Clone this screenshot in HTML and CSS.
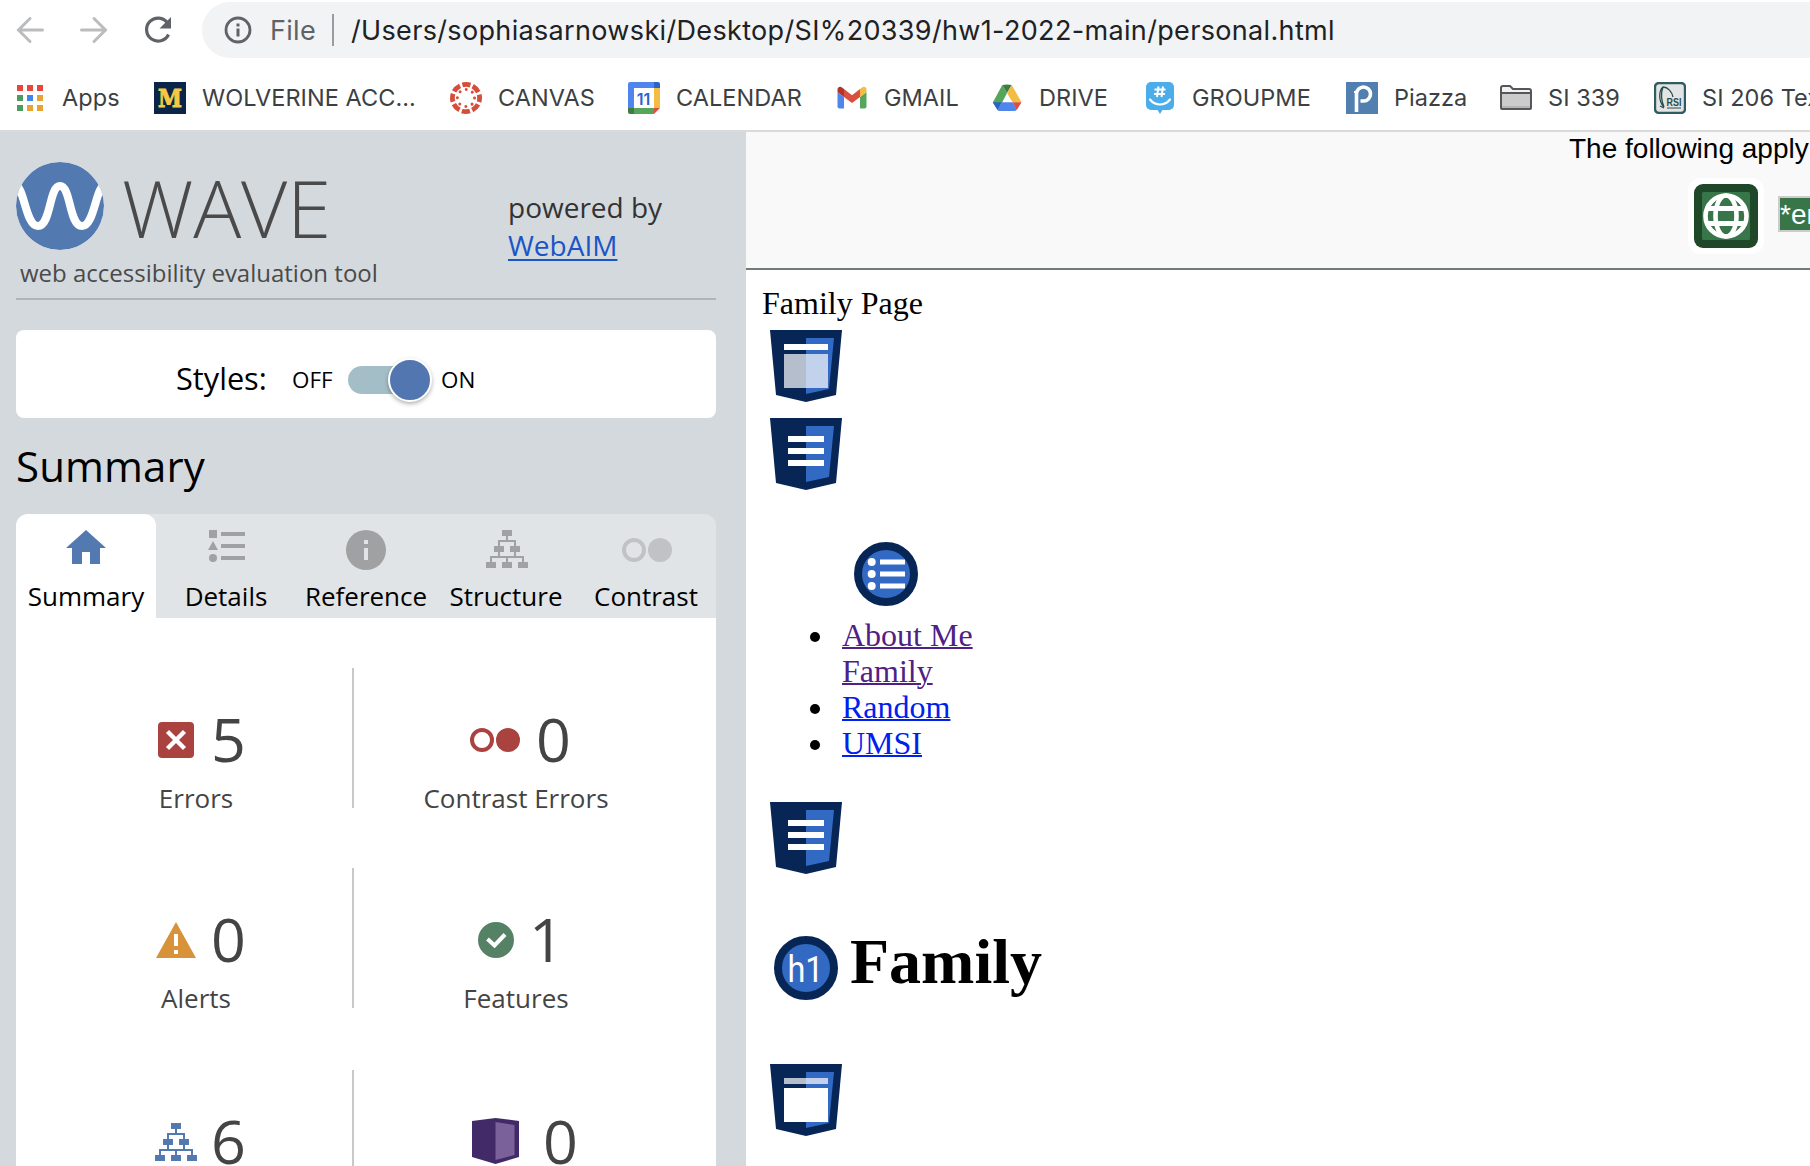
FILE: index.html
```html
<!DOCTYPE html>
<html lang="en">
<head>
<meta charset="utf-8">
<title>Family Page</title>
<link rel="stylesheet" href="styles.css">
</head>
<body>
<svg class="defs" width="0" height="0">
  <defs>
    <symbol id="shield" viewBox="0 0 72 72"><path fill="#072655" d="M0 0h72l-6 65-30 7-30-7z"/><path fill="#326ac3" d="M36 8h28l-5 51-23 5z"/></symbol>
    <symbol id="tree" viewBox="0 0 42 38"><path fill="currentColor" d="M16 0h10v6H16zM8 16h10v6H8zM24 16h10v6H24zM0 32h10v6H0zM16 32h10v6H16zM32 32h10v6H32z"/><path fill="none" stroke="currentColor" stroke-width="2" d="M21 6v5M13 16v-5h16v5M13 22v5M29 22v5M5 32v-5h32v5M21 27v5"/></symbol>
    <symbol id="rings" viewBox="0 0 50 24"><circle cx="12" cy="12" r="10" fill="none" stroke="currentColor" stroke-width="4"/><circle cx="38" cy="12" r="12" fill="currentColor"/></symbol>
  </defs>
</svg>

<header class="browser">
  <div class="toolbar">
    <svg class="nav" width="32" height="32" viewBox="0 0 32 32"><path class="arrow" d="M28.500 16H5M16 4.500 4.500 16 16 27.500"/></svg>
    <svg class="nav" width="32" height="32" viewBox="0 0 32 32"><path class="arrow" d="M3.500 16H27M16 4.500 27.500 16 16 27.500"/></svg>
    <svg class="nav" width="32" height="32" viewBox="0 0 32 32"><path fill="none" stroke="#5f6368" stroke-width="3.200" d="M26.500 20.500A11.500 11.500 0 1 1 25.500 9"/><path fill="#5f6368" d="M29 3v11.500H17.500z"/></svg>
    <div class="address">
      <svg width="28" height="28" viewBox="0 0 28 28"><circle cx="14" cy="14" r="12" fill="none" stroke="#5f6368" stroke-width="2.800"/><path fill="#5f6368" d="M12.500 7.500h3v3h-3zM12.500 12.500h3v8h-3z"/></svg>
      <span class="scheme">File</span>
      <span class="bar"></span>
      <span class="url">/Users/sophiasarnowski/Desktop/SI%20339/hw1-2022-main/personal.html</span>
    </div>
  </div>
  <nav class="bookmarks">
    <a class="bm apps"><svg width="26" height="26" viewBox="0 0 26 26"><path fill="#e8453c" d="M0 0h6v6H0zM10 0h6v6h-6zM20 0h6v6h-6z"/><path fill="#4f9a5d" d="M0 10h6v6H0zM0 20h6v6H0z"/><path fill="#3d86f0" d="M10 10h6v6h-6z"/><path fill="#e8a333" d="M20 10h6v6h-6zM10 20h6v6h-6zM20 20h6v6h-6z"/></svg><span>Apps</span></a>
    <a class="bm"><svg width="32" height="32" viewBox="0 0 32 32"><path fill="#0a2548" d="M0 0h32v32H0z"/><text x="16" y="24.500" text-anchor="middle" textLength="24" lengthAdjust="spacingAndGlyphs" class="mich">M</text></svg><span>WOLVERINE ACC...</span></a>
    <a class="bm"><svg width="32" height="32" viewBox="0 0 32 32"><circle cx="16" cy="16" r="13.600" fill="none" stroke="#d64d3a" stroke-width="4.800" stroke-dasharray="8.200 2.480" stroke-dashoffset="4.100"/><circle cx="16" cy="16" r="8.600" fill="none" stroke="#d64d3a" stroke-width="3" stroke-linecap="round" stroke-dasharray="0.010 6.744"/></svg><span>CANVAS</span></a>
    <a class="bm"><svg width="32" height="32" viewBox="0 0 32 32"><path fill="#4f85ec" d="M2 0h24v6H6v20H0V2a2 2 0 0 1 2-2z"/><path fill="#2a63c9" d="M26 0h4a2 2 0 0 1 2 2v4h-6z"/><path fill="#f3bc42" d="M26 6h6v20h-6z"/><path fill="#56a55b" d="M6 26h20v6H6z"/><path fill="#3b7d42" d="M0 26h6v6H2a2 2 0 0 1-2-2z"/><path fill="#da4f3f" d="M26 26h6l-6 6z"/><text x="15.500" y="22.500" text-anchor="middle" class="day">11</text></svg><span>CALENDAR</span></a>
    <a class="bm"><svg width="32" height="32" viewBox="0 0 32 32"><path fill="#4f85ec" d="M1.500 10v14.500a2 2 0 0 0 2 2H8V15z"/><path fill="#56a55b" d="M30.500 10v14.500a2 2 0 0 1-2 2H24V15z"/><path fill="#da4f3f" d="M8 7v8l8 6 8-6V7l-8 6.200z"/><path fill="#b5342a" d="M1.500 10V7.500C1.500 5 4.200 4 6 5.500L8 7v8z"/><path fill="#f3bc42" d="M30.500 10V7.500C30.500 5 27.800 4 26 5.500L24 7v8z"/></svg><span>GMAIL</span></a>
    <a class="bm"><svg width="32" height="32" viewBox="0 0 32 32"><path fill="#56a55b" d="M11.300 3 16 11 7 28.500 1.800 20.500z"/><path fill="#3b7d42" d="M11.300 3q4.700-1.200 9.400 0L16 11z"/><path fill="#f3bc42" d="M20.700 3 30.500 20.200H21.500L16 11z"/><path fill="#2a63c9" d="M1.800 20.200h9L6.500 28z"/><path fill="#4f85ec" d="M10.800 20.200h10.700l4.300 7.300q-1 1.500-2.500 1.500H8.500q-1.500 0-2-1z"/><path fill="#da4f3f" d="M21.500 20.200h9L25.800 28z"/></svg><span>DRIVE</span></a>
    <a class="bm"><svg width="32" height="32" viewBox="0 0 32 32"><path fill="#4badea" d="M7 0h18a5 5 0 0 1 5 5v18a5 5 0 0 1-5 5h-6.500L16 32l-2.500-4H7a5 5 0 0 1-5-5V5a5 5 0 0 1 5-5z"/><path fill="none" stroke="#fff" stroke-width="2" d="M14.500 4.500 13 15M19 4.500 17.500 15M10.500 7.500h11M10 12h11"/><path fill="none" stroke="#fff" stroke-width="2.200" stroke-linecap="round" d="M6 17.500q4 5 10 5t10-5"/></svg><span>GROUPME</span></a>
    <a class="bm"><svg width="32" height="32" viewBox="0 0 32 32"><path fill="#5180b0" d="M0 0h32v32H0z"/><path fill="none" stroke="#fff" stroke-width="3.600" d="M10.500 30V12a7 7 0 1 1 7 7h-3"/><path fill="none" stroke="#fff" stroke-width="2" d="M8 10h3"/></svg><span>Piazza</span></a>
    <a class="bm"><svg width="32" height="32" viewBox="0 0 32 32"><path fill="#f2f2f2" stroke="#55555a" stroke-width="2" d="M1 26V6q0-2 2-2h7l3 3h16q2 0 2 2v17q0 1-1 1H2q-1 0-1-1z"/><path fill="#cbcbcb" d="M2 12h28v12H2z"/><path fill="#b4b4b4" d="M2 24h28v2H2z"/><path stroke="#55555a" stroke-width="2" d="M1 11h30"/></svg><span>SI 339</span></a>
    <a class="bm"><svg width="32" height="32" viewBox="0 0 32 32"><rect x="1" y="1" width="30" height="30" rx="4" fill="#e3e4e4" stroke="#2f5c60" stroke-width="2.400"/><path fill="none" stroke="#284d50" stroke-width="1.300" d="M10 25C4 19 5 8 9 5c5 0 9 5 10 10M9 5c-3 8-1 15 1 20M6 24l4 2"/><text x="12.500" y="23.500" textLength="15" lengthAdjust="spacingAndGlyphs" class="rsi">RSI</text><path stroke="#284d50" d="M13 26h14"/></svg><span>SI 206 Textbook</span></a>
  </nav>
</header>

<div class="main">
  <aside class="wave">
    <div class="brand">
      <div class="brand-left">
        <div class="logo">
          <svg width="88" height="88" viewBox="0 0 88 88"><defs><clipPath id="disc"><circle cx="44" cy="44" r="44"/></clipPath></defs><g clip-path="url(#disc)"><circle cx="44" cy="44" r="44" fill="#5279b0"/><path fill="none" stroke="#fff" stroke-width="8" d="M-2 22C9 24 9 64 22 64S33 24 44 24 53 64 66 64 79 24 90 22"/></g></svg>
          <span class="wordmark">WAVE</span>
        </div>
        <div class="tagline">web accessibility evaluation tool</div>
      </div>
      <div class="powered">powered by<br><a>WebAIM</a></div>
    </div>
    <div class="styles-box">
      <span class="styles-label">Styles:</span>
      <span class="off">OFF</span>
      <span class="toggle"><span class="knob"></span></span>
      <span class="on">ON</span>
    </div>
    <h2 class="heading">Summary</h2>
    <div class="tabs">
      <div class="tab active"><svg width="40" height="40" viewBox="0 0 40 40"><path fill="#5279b0" d="M20 0 40 18h-6v16H24V22h-8v12H6V18H0z"/></svg><span>Summary</span></div>
      <div class="tab"><svg width="40" height="40" viewBox="0 0 40 40"><path fill="#a0a1a2" d="M3 0h8v8H3zM7 11l5 9H2zM15 2h24v4H15zM15 14h24v4H15zM15 26h24v4H15z"/><circle cx="7" cy="28" r="4" fill="#a0a1a2"/></svg><span>Details</span></div>
      <div class="tab"><svg width="40" height="40" viewBox="0 0 40 40"><circle cx="20" cy="20" r="20" fill="#a0a1a2"/><path fill="#e0e4e6" d="M18 10h4v4h-4zM18 18h4v12h-4z"/></svg><span>Reference</span></div>
      <div class="tab grey"><svg width="42" height="38"><use href="#tree"/></svg><span>Structure</span></div>
      <div class="tab pale"><svg class="rings" width="50" height="24"><use href="#rings"/></svg><span>Contrast</span></div>
    </div>
    <div class="panel">
      <div class="stat left"><div class="count"><span class="ic"><svg width="36" height="36" viewBox="0 0 36 36"><rect width="36" height="36" rx="4" fill="#aa4340"/><path stroke="#fff" stroke-width="4.400" d="m9.500 9.500 17 17m0-17-17 17"/></svg></span><b>5</b></div><span>Errors</span></div>
      <div class="stat right"><div class="count red"><span class="ic"><svg width="50" height="24"><use href="#rings"/></svg></span><b>0</b></div><span>Contrast Errors</span></div>
      <div class="stat left"><div class="count"><span class="ic"><svg width="40" height="36" viewBox="0 0 40 36"><path fill="#d7923a" d="m20 0 20 36H0z"/><path fill="#fff" d="M18 12h4v12h-4zM18 28h4v4h-4z"/></svg></span><b>0</b></div><span>Alerts</span></div>
      <div class="stat right"><div class="count check"><span class="ic"><svg width="36" height="36" viewBox="0 0 36 36"><circle cx="18" cy="18" r="18" fill="#558265"/><path fill="none" stroke="#fff" stroke-width="4" d="m9.500 17 7 6.500L27 12.500"/></svg></span><b>1</b></div><span>Features</span></div>
      <div class="stat left third"><div class="count blue"><span class="ic"><svg width="42" height="38"><use href="#tree"/></svg></span><b>6</b></div></div>
      <div class="stat right third"><div class="count aria"><span class="ic"><svg width="47" height="46" viewBox="0 0 47 46"><path fill="#422a69" d="M0 3 23.500 0 47 3v36l-23.500 7L0 39z"/><path fill="#7a6199" d="m23.500 4 19 3v30l-19 5z"/></svg></span><b>0</b></div></div>
    </div>
  </aside>

  <main class="page">
    <div class="notice">
      <p>The following apply to the entire page:</p>
      <div class="marks">
        <svg width="76" height="76" viewBox="0 0 76 76"><rect width="76" height="76" rx="13" fill="#fff"/><rect x="6" y="6" width="64" height="64" rx="9" fill="#1e4828"/><rect x="14" y="14" width="48" height="48" rx="1.500" fill="#38764a"/><g fill="none" stroke="#fff" stroke-width="4.600"><circle cx="38" cy="38" r="20.500"/><ellipse cx="38" cy="38" rx="10.500" ry="20.500" /><path stroke-width="5" d="M18.500 30.500h39M18.500 45.500h39"/></g></svg>
        <span class="lang">*en</span>
      </div>
    </div>
    <div class="doc">
      <div class="line">Family Page</div>
      <svg class="mark" width="72" height="72"><use href="#shield"/><path fill="#fff" d="M14 14h44v6H14z"/><path fill="#fff" fill-opacity=".7" d="M14 24h44v34H14z"/></svg>
      <svg class="mark" width="72" height="72"><use href="#shield"/><path fill="#fff" d="M18 18h36v6H18zM18 30h36v6H18zM18 42h36v6H18z"/></svg>
      <svg class="list-mark" width="64" height="64" viewBox="0 0 64 64"><circle cx="32" cy="32" r="28" fill="#326ac3" stroke="#072655" stroke-width="8"/><g fill="#fff"><circle cx="17.700" cy="20" r="4"/><circle cx="17.700" cy="32" r="4"/><circle cx="17.700" cy="44" r="4"/><path d="M26 17.500h25v5H26zM26 29.500h25v5H26zM26 41.500h25v5H26z"/></g></svg>
      <ul class="links">
        <li><a class="seen">About Me</a><br><a class="seen">Family</a></li>
        <li><a>Random</a></li>
        <li><a>UMSI</a></li>
      </ul>
      <svg class="mark" width="72" height="72"><use href="#shield"/><path fill="#fff" d="M18 18h36v6H18zM18 30h36v6H18zM18 42h36v6H18z"/></svg>
      <h1 class="title"><svg width="64" height="64" viewBox="0 0 64 64"><circle cx="32" cy="32" r="28" fill="#326ac3" stroke="#072655" stroke-width="8"/><text x="31.500" y="46" text-anchor="middle" textLength="36" lengthAdjust="spacingAndGlyphs" class="h1-text">h1</text></svg><span>Family</span></h1>
      <svg class="mark" width="72" height="72"><use href="#shield"/><path fill="#fff" fill-opacity=".7" d="M14 14h44v6H14z"/><path fill="#fff" d="M14 24h44v34H14z"/></svg>
    </div>
  </main>
</div>
</body>
</html>
```
FILE: styles.css
```css
* { box-sizing: border-box; }
body { margin: 0; width: 1810px; height: 1166px; overflow: hidden; display: flex; flex-direction: column; background: #fff; }
svg { display: block; flex: none; }
.defs { position: absolute; }

/* Browser chrome */
.browser { height: 132px; flex: none; border-bottom: 2px solid #dadada; font-family: Inter, sans-serif; overflow: hidden; }
.toolbar { display: flex; align-items: center; height: 60px; padding-left: 14px; }
.nav { margin-right: 32px; }
.nav:nth-child(3) { margin-right: 28px; }
.arrow { fill: none; stroke: #babcbe; stroke-width: 3; stroke-linecap: round; }
.address { flex: 1; display: flex; align-items: center; height: 56px; padding-left: 22px; border-radius: 28px 0 0 28px; background: #f1f3f4; font-size: 27px; white-space: nowrap; }
.scheme { width: 62px; margin-left: 18px; color: #5f6368; letter-spacing: .3px; }
.bar { width: 2px; height: 32px; background: #9a9da0; margin-right: 17px; }
.url { color: #202124; letter-spacing: .34px; }
.bookmarks { display: grid; grid-template-columns: 137px 296px 178px 208px 155px 153px 202px 154px 154px 200px; padding-left: 17px; margin-top: 22px; height: 32px; font-size: 23.500px; color: #3c4043; }
.bm { display: flex; align-items: center; gap: 16px; white-space: nowrap; letter-spacing: .05px; }
.bm span { margin-top: -2px; }
.bm.apps { gap: 19px; }
.mich { font: bold 25px "DejaVu Serif", serif; fill: #f6c945; stroke: #f6c945; stroke-width: 1px; }
.day { font: 600 16px Inter, sans-serif; fill: #2a63c9; }
.rsi { font: bold 10px "Liberation Sans", sans-serif; fill: #284d50; }

.main { display: flex; flex: 1; min-height: 0; }

/* Evaluation sidebar */
.wave { width: 746px; flex: none; padding: 0 30px 0 16px; background: #d4d9dd; font-family: "Open Sans", sans-serif; display: flex; flex-direction: column; }
.brand { display: flex; height: 168px; flex: none; border-bottom: 2px solid #b0b5b8; padding-top: 30px; }
.brand-left { width: 492px; }
.logo { display: flex; height: 88px; }
.wordmark { margin-left: 18px; font-size: 80px; font-weight: 300; line-height: 90px; color: #4a4a4a; letter-spacing: -.2px; }
.tagline { margin: 7px 0 0 4px; font-size: 24px; line-height: 32px; color: #4a4a4a; white-space: nowrap; }
.powered { padding-top: 26px; font-size: 28px; line-height: 38px; color: #333; }
.powered a { color: #1a55c8; text-decoration: underline; text-decoration-thickness: 2px; text-underline-offset: 3px; }
.styles-box { display: flex; align-items: center; height: 88px; flex: none; margin-top: 30px; padding: 12px 0 0 160px; border-radius: 8px; background: #fff; font-size: 22.400px; }
.styles-label { font-size: 30.700px; width: 116px; margin-top: -4px; }
.off { width: 56px; margin-top: -2px; }
.on { margin-top: -2px; }
.toggle { width: 76px; height: 28px; border-radius: 14px; background: #a4bec8; margin-right: 17px; display: flex; align-items: center; justify-content: flex-end; }
.knob { flex: none; width: 44px; height: 44px; margin-right: -8px; border: 2px solid #fff; border-radius: 50%; background: #5277b0; box-shadow: 0 2px 4px rgba(0, 0, 0, .3); }
.heading { margin: 18px 0 0; height: 78px; flex: none; font-size: 42px; line-height: 60px; font-weight: 400; letter-spacing: .1px; }
.tabs { display: flex; height: 104px; flex: none; border-radius: 12px 12px 0 0; background: #e0e4e6; font-size: 26px; }
.tab { width: 140px; padding-top: 16px; display: flex; flex-direction: column; align-items: center; color: #a0a1a2; }
.tab svg { flex: none; }
.tab.grey svg { margin-left: 2px; }
.tab .rings { margin: 8px 0 8px 2px; }
.tab span { color: #000; line-height: 36px; margin-top: auto; margin-bottom: 4px; }
.tab.active { background: #fff; border-radius: 12px 12px 0 0; }
.tab.pale { color: #c1c2c5; }
.panel { flex: 1; min-height: 0; overflow: hidden; background: #fff; padding: 50px 38px 0 24px; display: grid; grid-template-columns: 314px 324px; grid-auto-rows: 140px; row-gap: 60px; color: #444; font-size: 26px; }
.stat { height: 140px; text-align: center; line-height: 36px; }
.stat.left { border-right: 2px solid #c8c8c8; }
.stat.third { margin-top: 2px; }
.stat > span { display: block; }
.count { display: flex; align-items: center; height: 80px; margin: 32px 0 0; padding-left: 110px; }
.right .count { padding-left: 115px; }
.ic { width: 52px; display: flex; justify-content: center; }
.count b { font-size: 61px; font-weight: 400; line-height: 80px; margin: -2px 0 0 9px; color: #444; }
.right .count b { margin-left: 15px; }
.right .check b { margin-left: 8px; }
.right .aria b { margin-left: 22px; }
.right .check .ic, .right .aria .ic { padding-left: 1px; }
.right .aria svg { margin-top: -3px; }
.red { color: #aa4340; }
.blue { color: #5279b0; }

/* Evaluated page */
.page { flex: 1; min-width: 0; overflow: hidden; }
.notice { height: 138px; border-bottom: 2px solid #757b75; background: #f9f9f9; padding: 1px 0 0 823px; font: 28px/32px "Liberation Sans", sans-serif; white-space: nowrap; overflow: hidden; }
.notice p { margin: 0; }
.marks { display: flex; align-items: center; margin: 13px 0 0 119px; gap: 14px; }
.lang { height: 36px; margin-top: -4px; border: 2px solid #ccc; background: #38764a; color: #fff; line-height: 33px; }
.doc { padding: 15px 16px; font: 32px/36px "Liberation Serif", serif; color: #000; }
.line { margin-bottom: 9px; }
.mark { margin: 0 0 16px 8px; }
.list-mark { margin: 52px 0 0 92px; }
.links { margin: 11px 0 41px; padding-left: 80px; list-style: none; }
.links li { display: flow-root; }
.links li::before { content: ""; float: left; width: 10px; height: 10px; margin: 15px 0 0 -32px; border-radius: 50%; background: #000; }
.links a { color: #0020ee; text-decoration: underline; text-decoration-thickness: 2px; }
.links a.seen { color: #4f2185; }
.title { display: flex; margin: 62px 0 64px 12px; height: 64px; font-size: 64px; line-height: 72px; gap: 12px; }
.title span { margin-top: -10px; }
.h1-text { font: 400 36px Roboto, sans-serif; fill: #fff; }
```
